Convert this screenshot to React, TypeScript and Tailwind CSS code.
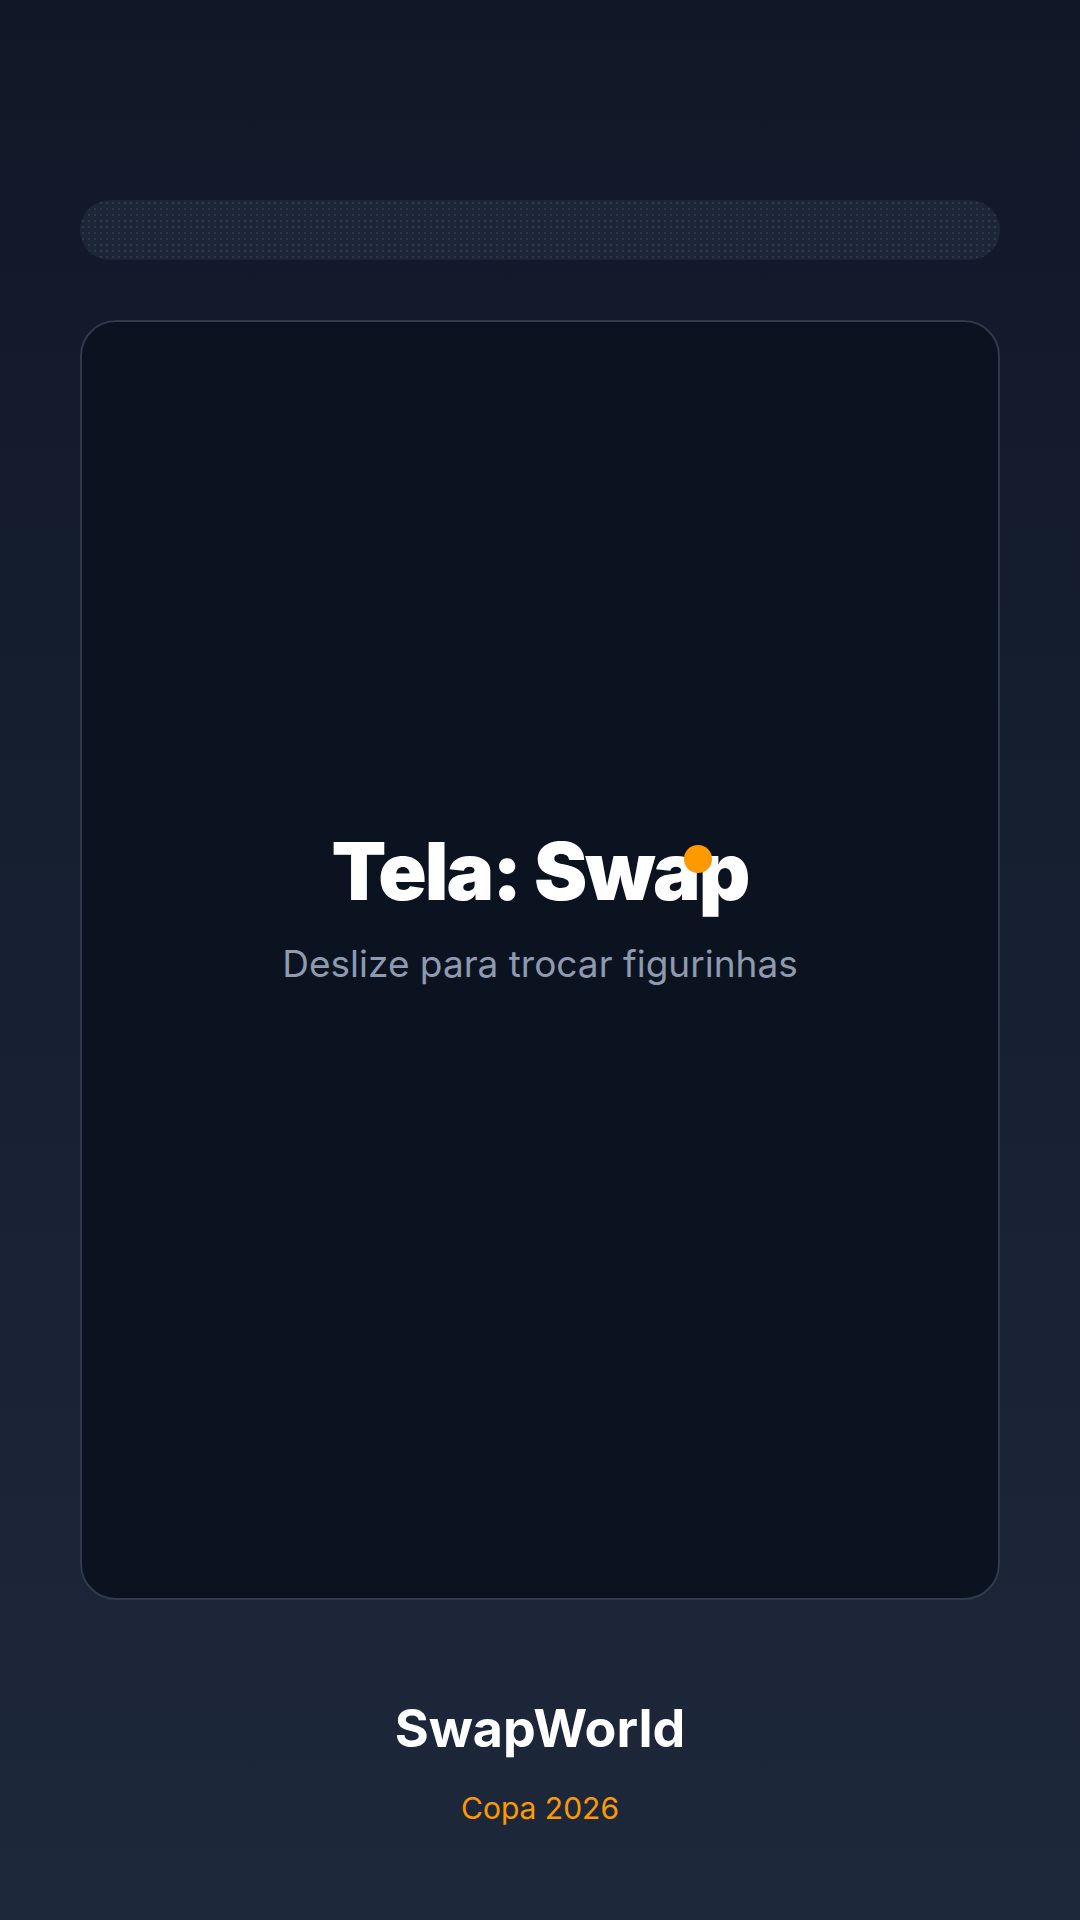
import { useState } from "react";

export default function App() {
  const [ready] = useState(false);

  return (
    <div
      className="min-h-[1920px] w-full bg-gradient-to-b from-[#101828] to-[#1e283b] px-20 pt-[200px] flex flex-col"
      style={{ fontFamily: "Inter, 'Noto Sans', sans-serif" }}
    >
      {/* Loading bar */}
      <div className="h-[60px] w-full rounded-full bg-[#1d2638] bg-[radial-gradient(circle,rgba(100,116,139,0.22)_0.8px,transparent_1px)] bg-[length:6px_6px]">
        {ready && <div className="h-full w-1/3 rounded-full bg-amber-500" />}
      </div>

      {/* Swap card */}
      <div className="mt-[60px] h-[1280px] w-full rounded-[36px] border-2 border-[#2f3a4c] bg-[#0c1320] flex flex-col items-center justify-center pb-[106px]">
        <div className="relative">
          <h1 className="text-[80px] leading-none font-black tracking-tight text-white">
            Tela: Swap
          </h1>
          <span className="absolute left-[352px] top-[14px] h-7 w-7 rounded-full bg-amber-500" />
        </div>
        <p className="mt-[33px] text-[37px] leading-10 text-[#8e9ab0]">Deslize para trocar figurinhas</p>
      </div>

      {/* Footer */}
      <div className="flex flex-col items-center mt-[103px]">
        <h2 className="text-[52px] leading-none font-bold text-white">SwapWorld</h2>
        <span className="mt-[35px] text-3xl text-amber-500">Copa 2026</span>
      </div>
    </div>
  );
}
